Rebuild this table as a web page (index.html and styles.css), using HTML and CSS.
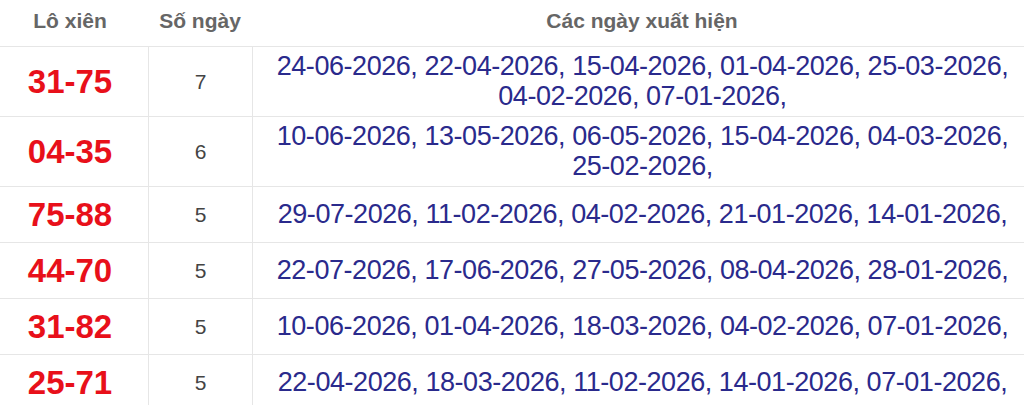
FILE: index.html
```html
<!DOCTYPE html>
<html lang="vi">
<head>
<meta charset="utf-8">
<title>Lô xiên</title>
<link rel="stylesheet" href="styles.css">
</head>
<body>
<div class="table">
  <div class="row head">
    <div class="cell c1">Lô xiên</div>
    <div class="cell c2">Số ngày</div>
    <div class="cell c3">Các ngày xuất hiện</div>
  </div>
  <div class="row">
    <div class="cell c1 pair">31-75</div>
    <div class="cell c2 count">7</div>
    <div class="cell c3 dates">24-06-2026, 22-04-2026, 15-04-2026, 01-04-2026, 25-03-2026, 04-02-2026, 07-01-2026,</div>
  </div>
  <div class="row">
    <div class="cell c1 pair">04-35</div>
    <div class="cell c2 count">6</div>
    <div class="cell c3 dates">10-06-2026, 13-05-2026, 06-05-2026, 15-04-2026, 04-03-2026, 25-02-2026,</div>
  </div>
  <div class="row">
    <div class="cell c1 pair">75-88</div>
    <div class="cell c2 count">5</div>
    <div class="cell c3 dates">29-07-2026, 11-02-2026, 04-02-2026, 21-01-2026, 14-01-2026,</div>
  </div>
  <div class="row">
    <div class="cell c1 pair">44-70</div>
    <div class="cell c2 count">5</div>
    <div class="cell c3 dates">22-07-2026, 17-06-2026, 27-05-2026, 08-04-2026, 28-01-2026,</div>
  </div>
  <div class="row">
    <div class="cell c1 pair">31-82</div>
    <div class="cell c2 count">5</div>
    <div class="cell c3 dates">10-06-2026, 01-04-2026, 18-03-2026, 04-02-2026, 07-01-2026,</div>
  </div>
  <div class="row">
    <div class="cell c1 pair">25-71</div>
    <div class="cell c2 count">5</div>
    <div class="cell c3 dates">22-04-2026, 18-03-2026, 11-02-2026, 14-01-2026, 07-01-2026,</div>
  </div>
</div>
</body>
</html>
```

FILE: styles.css
```css
html, body {
  margin: 0;
  padding: 0;
  background: #ffffff;
  overflow: hidden;
}

body {
  font-family: "Liberation Sans", Arial, sans-serif;
}

.table {
  margin: 0 -8px;
}

.row {
  display: grid;
  grid-template-columns: 156px 104px 1fr;
  border-bottom: 1px solid #e6e6e6;
}

.cell {
  display: flex;
  align-items: center;
  justify-content: center;
  text-align: center;
  box-sizing: border-box;
  min-height: 55px;
  padding: 5px 8px;
}

.row:not(.head) .c2,
.row:not(.head) .c3 {
  border-left: 1px solid #e6e6e6;
}

.head .cell {
  min-height: 46px;
  padding: 0 8px 4px;
  font-size: 21px;
  font-weight: bold;
  color: #666666;
}

.pair {
  font-size: 33px;
  font-weight: bold;
  color: #e8101a;
}

.count {
  font-size: 21px;
  color: #444444;
}

.dates {
  font-size: 27px;
  letter-spacing: -0.45px;
  line-height: 29.5px;
  color: #2a2a8c;
}
```
